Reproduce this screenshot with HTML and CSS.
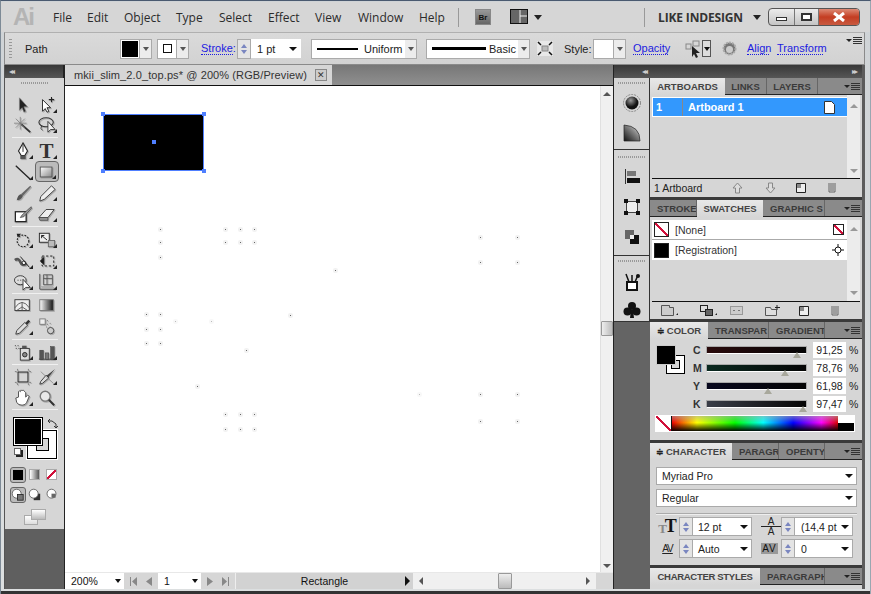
FILE: index.html
```html
<!DOCTYPE html>
<html lang="en">
<head>
<meta charset="utf-8">
<title>Illustrator</title>
<link rel="stylesheet" href="styles.css">
</head>
<body>
<div class="app">
  <header class="titlebar">
    <span class="logo">Ai</span>
    <nav class="menu"><span>File</span><span>Edit</span><span>Object</span><span>Type</span><span>Select</span><span>Effect</span><span>View</span><span>Window</span><span>Help</span></nav>
    <i class="vsep"></i>
    <span class="br">Br</span>
    <svg class="layout-ic" width="18" height="16" viewBox="0 0 18 16"><rect x=".5" y=".5" width="17" height="14" fill="#666" stroke="#111"/><path d="M10 1v13M10 7h7" stroke="#eee"/></svg>
    <i class="tri tri-l"></i>
    <i class="vsep vsep2"></i>
    <span class="workspace">LIKE INDESIGN</span>
    <i class="tri tri-w"></i>
    <div class="winbtns">
      <span class="wb"><i class="min"></i></span>
      <span class="wb wb2"><i class="max"></i></span>
      <span class="wb close"><svg width="14" height="10" viewBox="0 0 14 10"><path d="M2 1l10 8M12 1L2 9" stroke="#fff" stroke-width="3"/></svg></span>
    </div>
  </header>

  <section class="control">
    <i class="grip"></i>
    <span class="c-path">Path</span>
    <span class="sw sw-fill"></span><span class="dd"><i class="tri-s"></i></span>
    <span class="sw sw-stroke"><i></i></span><span class="dd"><i class="tri-s"></i></span>
    <a class="link c-stroke">Stroke:</a>
    <span class="spin"><i class="up"></i><i class="down"></i></span>
    <span class="field c-pt">1 pt<i class="tri-k"></i></span>
    <span class="linebox lb1"><i class="ln ln1"></i><b>Uniform</b></span><span class="dd dd2"><i class="tri-s"></i></span>
    <span class="linebox lb2"><i class="ln ln2"></i><b>Basic</b></span><span class="dd dd2"><i class="tri-s"></i></span>
    <svg class="c-expand" width="16" height="15" viewBox="0 0 16 15"><rect width="16" height="15" fill="#e8e8e8"/><rect x="5" y="5" width="6" height="5" fill="#bbb" stroke="#888"/><path d="M1 1l3 3M15 1l-3 3M1 14l3-3M15 14l-3-3" stroke="#111" stroke-width="1.500"/></svg>
    <span class="c-style">Style:</span>
    <span class="sw sw-style"></span><span class="dd"><i class="tri-s"></i></span>
    <a class="link c-op">Opacity</a>
    <svg class="c-sel" width="17" height="18" viewBox="0 0 17 18"><rect x="1" y="4" width="5" height="5" fill="none" stroke="#888"/><rect x="8" y="1" width="6" height="5" fill="none" stroke="#888"/><path d="M7 6l8 7-4 0 2 4-2 1-2-4-2 3z" fill="#222"/></svg>
    <span class="c-sd"><i class="tri-k"></i></span>
    <svg class="c-gear" width="15" height="15" viewBox="0 0 15 15"><circle cx="7.500" cy="7.500" r="6" fill="#777" stroke="#aaa" stroke-width="2" stroke-dasharray="2 1"/><circle cx="7.500" cy="8.500" r="3.500" fill="#ccc"/></svg>
    <a class="link c-al">Align</a>
    <a class="link c-tr">Transform</a>
    <span class="c-menu"><i class="tri-m"></i><i class="lines"></i></span>
  </section>

  <main class="work">
    <aside class="tools">
      <div class="strip strip-l"><span class="dbl">◂◂</span></div>
      <i class="hgrip"></i>
      <div class="tgrid">
        <span class="t"><svg viewBox="0 0 20 20"><path d="M6 2v14l3-3 2 5 2-1-2-5h4z" fill="#222" stroke="#888" stroke-width=".6"/></svg></span>
        <span class="t c"><svg viewBox="0 0 20 20"><path d="M5 4v13l3-3 2 4 2-1-2-4h4z" fill="#fff" stroke="#222"/><path d="M15 1v6M12 4h6" stroke="#222" stroke-width="1.200"/></svg></span>
        <span class="t"><svg viewBox="0 0 20 20"><path d="M8 9l10 9" stroke="#333" stroke-width="2"/><path d="M7 1v14M0 8h14M2 3l10 10M12 3L2 13" stroke="#777" stroke-width=".8"/></svg></span>
        <span class="t c"><svg viewBox="0 0 20 20"><ellipse cx="9" cy="7" rx="8" ry="5" fill="none" stroke="#333" stroke-width="1.200"/><path d="M4 11q-2 3 1 5" fill="none" stroke="#333"/><path d="M11 6v12l3-3h5z" fill="#eee" stroke="#333"/></svg></span>
        <i class="tsep"></i>
        <span class="t c"><svg viewBox="0 0 20 20"><path d="M10 1l-5 9 3 5h4l3-5z" fill="#fff" stroke="#222" stroke-width="1.200"/><path d="M10 3v8" stroke="#222"/><rect x="7" y="15" width="6" height="4" fill="#555"/></svg></span>
        <span class="t c"><b class="tt">T</b></span>
        <span class="t c"><svg viewBox="0 0 20 20"><path d="M2 3l16 15" stroke="#222" stroke-width="1.300"/></svg></span>
        <span class="t c active"><svg viewBox="0 0 20 20"><defs><linearGradient id="g1" x1="0" y1="0" x2="1" y2="1"><stop offset="0" stop-color="#fff"/><stop offset="1" stop-color="#888"/></linearGradient></defs><rect x="2.500" y="4.500" width="13" height="11" fill="url(#g1)" stroke="#555"/></svg></span>
        <span class="t"><svg viewBox="0 0 20 20"><path d="M18 2L8 11l2 2 9-10z" fill="#666"/><path d="M8 11q-4 1-5 7 5 0 7-5z" fill="#555"/></svg></span>
        <span class="t c"><svg viewBox="0 0 20 20"><path d="M15 2l4 4L7 17l-5 2 1-5z" fill="#eee" stroke="#333"/></svg></span>
        <span class="t"><svg viewBox="0 0 20 20"><rect x="1.500" y="7.500" width="12" height="11" fill="#fff" stroke="#222" stroke-width="1.400"/><path d="M19 2L9 11l-2 3 4-1 9-10z" fill="#999" stroke="#333" stroke-width=".7"/></svg></span>
        <span class="t c"><svg viewBox="0 0 20 20"><path d="M1 14l8-9h9l-7 9z" fill="#eee" stroke="#333"/><path d="M1 14h10v3H2z" fill="#999" stroke="#333" stroke-width=".7"/></svg></span>
        <i class="tsep"></i>
        <span class="t c"><svg viewBox="0 0 20 20"><circle cx="10" cy="11" r="6.500" fill="none" stroke="#222" stroke-width="1.300" stroke-dasharray="2 1.500"/><path d="M3 3l5 0-4 4z" fill="#222"/></svg></span>
        <span class="t c"><svg viewBox="0 0 20 20"><rect x="1.500" y="2.500" width="11" height="10" fill="#eee" stroke="#222"/><rect x="11.500" y="10.500" width="7" height="7" fill="#bbb" stroke="#666"/><path d="M10 10L4 5M4 5v3M4 5h3" fill="none" stroke="#111"/></svg></span>
        <span class="t c"><svg viewBox="0 0 20 20"><path d="M1 9q4-3 6 2t7 2" fill="none" stroke="#555" stroke-width="3"/><circle cx="11" cy="12" r="2" fill="#fff" stroke="#222"/><path d="M7 5l10 12" stroke="#222"/></svg></span>
        <span class="t c"><svg viewBox="0 0 20 20"><path d="M2 10l5-5v10z" fill="#222"/><rect x="4.500" y="4.500" width="13" height="11" fill="none" stroke="#111" stroke-dasharray="2.500 2"/></svg></span>
        <span class="t c"><svg viewBox="0 0 20 20"><ellipse cx="7" cy="8" rx="6.500" ry="5" fill="#ddd" stroke="#333"/><path d="M10 7v12l3-3h5z" fill="#fff" stroke="#333"/><path d="M4 8h1M7 8h1" stroke="#222"/></svg></span>
        <span class="t c"><svg viewBox="0 0 20 20"><path d="M2 1v17h17" fill="none" stroke="#444"/><path d="M6 2h10v11H6zM6 6h10M10 2v11" fill="none" stroke="#555"/><path d="M3 15h14M3 17h14" stroke="#aaa"/></svg></span>
        <i class="tsep"></i>
        <span class="t"><svg viewBox="0 0 20 20"><rect x="1" y="3" width="16" height="12" fill="#eee" stroke="#333"/><path d="M1 12q8-12 16 0M9 6v9M3 15l6-4 6 4" fill="none" stroke="#555"/></svg></span>
        <span class="t"><svg viewBox="0 0 20 20"><defs><linearGradient id="g2"><stop offset="0" stop-color="#fff"/><stop offset="1" stop-color="#111"/></linearGradient></defs><rect x="2" y="3" width="15" height="12" fill="url(#g2)" stroke="#777"/></svg></span>
        <span class="t c"><svg viewBox="0 0 20 20"><path d="M16 2l2 2-4 4-2-2z" fill="#333"/><path d="M12 5l3 3L6 17l-4 1 1-4z" fill="#ddd" stroke="#333"/></svg></span>
        <span class="t"><svg viewBox="0 0 20 20"><rect x="2" y="1" width="6" height="6" fill="#eee" stroke="#777"/><circle cx="14" cy="14" r="3.500" fill="#ccc" stroke="#444"/><path d="M10 3h1M13 6h1M10 7h1M13 10h1M9 10h1" stroke="#666"/></svg></span>
        <i class="tsep"></i>
        <span class="t c"><svg viewBox="0 0 20 20"><rect x="7" y="6" width="10" height="13" fill="#ddd" stroke="#333"/><circle cx="12" cy="13" r="2.500" fill="#888" stroke="#222"/><rect x="9" y="3" width="5" height="3" fill="#555"/><path d="M1 3h1M4 3h1M2 6h1M5 6h1" stroke="#222"/></svg></span>
        <span class="t c"><svg viewBox="0 0 20 20"><path d="M1 18h18" stroke="#333"/><rect x="2" y="8" width="4" height="10" fill="#555" stroke="#333" stroke-width=".5"/><rect x="8" y="11" width="4" height="7" fill="#777" stroke="#333" stroke-width=".5"/><rect x="14" y="4" width="4" height="14" fill="#555" stroke="#333" stroke-width=".5"/></svg></span>
        <i class="tsep"></i>
        <span class="t"><svg viewBox="0 0 20 20"><rect x="4.500" y="4.500" width="11" height="11" fill="none" stroke="#333" stroke-width="1.200"/><path d="M1 4h2M17 4h2M1 16h2M17 16h2M4 1v2M16 1v2M4 17v2M16 17v2" stroke="#777"/></svg></span>
        <span class="t c"><svg viewBox="0 0 20 20"><path d="M19 1L9 9l2 2z" fill="#444"/><path d="M9 8l3 3-7 6-3 1 1-3z" fill="#ddd" stroke="#333"/><path d="M3 4l14 13" stroke="#888" stroke-width=".7"/></svg></span>
        <span class="t c"><svg viewBox="0 0 20 20"><path d="M2 10l3-1V3l1-1 1 1 1-2 1 1 1-1 1 1 1 1 1 1v5l2-2 2 1-3 7q-1 3-5 3-4 0-6-3z" fill="#fff" stroke="#444"/></svg></span>
        <span class="t"><svg viewBox="0 0 20 20"><circle cx="8" cy="8" r="5.500" fill="#e8e8e8" stroke="#777" stroke-width="1.500"/><path d="M12 12l6 6" stroke="#333" stroke-width="2.200"/></svg></span>
        <i class="tsep"></i>
      </div>
      <div class="fs">
        <span class="stroke-big"><i></i></span>
        <span class="fill-big"></span>
        <svg class="swap" width="11" height="11" viewBox="0 0 11 11"><path d="M1 3h4l4 3v4M1 3l2-2M1 3l2 2M9 10l-2-2M9 10l2-2" fill="none" stroke="#333"/></svg>
        <span class="mini"></span>
      </div>
      <i class="tsep tsep-f"></i>
      <div class="modes">
        <span class="m active"><i class="m-fill"></i></span>
        <span class="m"><i class="m-grad"></i></span>
        <span class="m"><i class="m-none"></i></span>
      </div>
      <i class="tsep tsep-f"></i>
      <div class="modes">
        <span class="m active"><svg viewBox="0 0 16 16"><circle cx="7" cy="7" r="5.500" fill="#fff" stroke="#555"/><rect x="8" y="8" width="7" height="7" fill="#777" stroke="#222"/></svg></span>
        <span class="m"><svg viewBox="0 0 16 16"><rect x="7" y="7" width="8" height="8" fill="#333"/><circle cx="7" cy="7" r="5.500" fill="#fff" stroke="#555"/></svg></span>
        <span class="m"><svg viewBox="0 0 16 16"><circle cx="8" cy="7" r="5.500" fill="#fff" stroke="#555"/><rect x="8" y="7" width="5" height="5" fill="#666"/></svg></span>
      </div>
      <i class="tsep tsep-f"></i>
      <div class="screen"><span class="s1"></span><span class="s2"></span></div>
      <div class="tools-foot"></div>
    </aside>

    <section class="doc">
      <div class="tabbar"><div class="tab"><span>mkii_slim_2.0_top.ps* @ 200% (RGB/Preview)</span><i class="tabx">✕</i></div></div>
      <div class="docbody">
        <div class="canvas">
          <svg class="art" viewBox="65 86 535 486" width="535" height="486">
            <rect x="103.500" y="114.500" width="100" height="56" fill="#000" stroke="#4f7fff" stroke-width="1"/>
            <path d="M101 112h4v4h-4zM202 112h4v4h-4zM101 169h4v4h-4zM202 169h4v4h-4zM152 140h4v4h-4z" fill="#4f7fff"/>
            <g class="pts">
              <path d="M160 229h1v1h-1zM160 242h1v1h-1zM160 257h1v1h-1zM225 229h1v1h-1zM240 229h1v1h-1zM254 229h1v1h-1zM225 242h1v1h-1zM240 242h1v1h-1zM254 242h1v1h-1zM480 237h1v1h-1zM517 237h1v1h-1zM480 262h1v1h-1zM517 262h1v1h-1zM335 270h1v1h-1zM146 314h1v1h-1zM160 314h1v1h-1zM146 329h1v1h-1zM160 329h1v1h-1zM146 343h1v1h-1zM160 343h1v1h-1zM290 315h1v1h-1zM246 350h1v1h-1zM197 386h1v1h-1zM480 394h1v1h-1zM517 394h1v1h-1zM225 414h1v1h-1zM240 414h1v1h-1zM254 414h1v1h-1zM225 429h1v1h-1zM240 429h1v1h-1zM254 429h1v1h-1zM480 421h1v1h-1zM517 421h1v1h-1z"/>
            </g>
            <g class="pts pts2"><path d="M175 321h1v1h-1zM211 321h1v1h-1zM419 394h1v1h-1z"/></g>
          </svg>
        </div>
        <div class="vscroll"><i class="sc-up"></i><span class="thumb"></span><i class="sc-dn"></i></div>
      </div>
      <div class="status">
        <span class="zoom">200%<i class="tri-k"></i></span>
        <span class="nav"><svg width="7" height="9" viewBox="0 0 7 9"><path d="M0 0h1v9H0zM7 0v9L2 4.500z" fill="#888"/></svg><svg width="6" height="9" viewBox="0 0 6 9"><path d="M6 0v9L0 4.500z" fill="#888"/></svg></span>
        <span class="page">1<i class="tri-k"></i></span>
        <span class="nav"><svg width="6" height="9" viewBox="0 0 6 9"><path d="M0 0v9l6-4.500z" fill="#888"/></svg><svg width="7" height="9" viewBox="0 0 7 9"><path d="M6 0h1v9H6zM0 0v9l5-4.500z" fill="#888"/></svg></span>
        <span class="stat-name"><span>Rectangle</span><i class="tri-r"></i></span>
        <span class="hscroll"><i class="h-l"></i><span class="hthumb"></span><i class="h-r"></i></span>
      </div>
    </section>

    <aside class="dock">
      <div class="strip strip-d"><span class="dbl">◂◂</span></div>
      <div class="dgroup g1">
        <i class="hgrip"></i>
        <svg width="20" height="20" viewBox="0 0 20 20"><circle cx="10" cy="10" r="8.500" fill="none" stroke="#888" stroke-dasharray="2 1"/><defs><radialGradient id="g3" cx=".4" cy=".3"><stop offset="0" stop-color="#999"/><stop offset="1" stop-color="#111"/></radialGradient></defs><circle cx="10" cy="10" r="6.500" fill="url(#g3)"/></svg>
        <svg width="18" height="18" viewBox="0 0 18 18"><defs><linearGradient id="g4" x1="0" y1="1" x2="1" y2="0"><stop offset="0" stop-color="#111"/><stop offset=".6" stop-color="#888"/><stop offset="1" stop-color="#eee"/></linearGradient></defs><path d="M1 1q16 1 16 16H1z" fill="url(#g4)" stroke="#222" stroke-width=".7"/></svg>
      </div>
      <div class="dgroup g2">
        <i class="hgrip"></i>
        <svg width="16" height="16" viewBox="0 0 16 16"><path d="M1.500 0v15" stroke="#333"/><rect x="3" y="2" width="9" height="5" fill="#777"/><rect x="3" y="9" width="13" height="5" fill="#111"/></svg>
        <svg width="16" height="16" viewBox="0 0 16 16"><rect x="2.500" y="2.500" width="11" height="11" fill="#eee" stroke="#444"/><path d="M0 0h4v4H0zM12 0h4v4h-4zM0 12h4v4H0zM12 12h4v4h-4z" fill="#111"/></svg>
        <svg width="16" height="16" viewBox="0 0 16 16"><rect x="1" y="1" width="9" height="9" fill="#666"/><rect x="6" y="6" width="9" height="9" fill="#111"/><rect x="6" y="6" width="4" height="4" fill="#eee"/></svg>
      </div>
      <div class="dgroup g3">
        <i class="hgrip"></i>
        <svg width="16" height="18" viewBox="0 0 16 18"><path d="M3 9h10v8H3z" fill="#fff" stroke="#111" stroke-width="2"/><path d="M5 9L2 1M8 9V2M11 9l3-7" stroke="#111" stroke-width="1.500"/><circle cx="14" cy="3" r="2" fill="#111"/></svg>
        <svg width="18" height="18" viewBox="0 0 18 18"><circle cx="9" cy="5" r="4" fill="#111"/><circle cx="4.500" cy="10.500" r="4" fill="#111"/><circle cx="13.500" cy="10.500" r="4" fill="#111"/><path d="M8 9h2l1 8H7z" fill="#111"/></svg>
      </div>
      <div class="dock-foot"></div>
    </aside>

    <aside class="panels">
      <div class="strip strip-r"><span class="dbl">▸▸</span></div>
      <section class="panel p-art">
        <div class="tabs"><b class="on w-a">ARTBOARDS</b><b class="w-l">LINKS</b><b class="w-y">LAYERS</b><i class="c-menu"><i class="tri-m"></i><i class="lines"></i></i></div>
        <div class="listwrap">
          <div class="list">
            <div class="art-row"><span class="ar-n">1</span><span class="ar-t">Artboard 1</span><svg width="11" height="13" viewBox="0 0 11 13"><path d="M.5.5h7l3 3v9H.5z" fill="#fff" stroke="#333"/></svg></div>
          </div>
          <div class="lscroll"><i class="sc-up"></i><i class="sc-dn"></i></div>
        </div>
        <div class="pfoot"><span class="foot-txt">1 Artboard</span>
          <svg class="fa" width="11" height="12" viewBox="0 0 11 12"><path d="M5.500 1L1 6h2.500v5h4V6H10z" fill="#ddd" stroke="#888"/></svg>
          <svg class="fb" width="11" height="12" viewBox="0 0 11 12"><path d="M5.500 11L1 6h2.500V1h4v5H10z" fill="#ddd" stroke="#888"/></svg>
          <svg class="fc" width="10" height="10" viewBox="0 0 10 10"><path d="M.5.5h9v9h-9z" fill="#eee" stroke="#222"/><path d="M1 1h4v4H1z" fill="#888"/></svg>
          <svg class="fd" width="10" height="11" viewBox="0 0 10 11"><path d="M1 2h8M2 3v7h6V3M4 3v6M6 3v6" fill="none" stroke="#666"/></svg>
        </div>
      </section>
      <section class="panel p-sw">
        <div class="tabs"><b class="w-s sp">STROKE</b><b class="on w-w">SWATCHES</b><b class="w-g sp">GRAPHIC S</b><i class="c-menu"><i class="tri-m"></i><i class="lines"></i></i></div>
        <div class="listwrap lw2">
          <div class="list">
            <div class="sw-row"><span class="chip chip-none"></span><span class="sw-t">[None]</span><span class="chip-s"></span></div>
            <div class="sw-row"><span class="chip chip-black"></span><span class="sw-t">[Registration]</span><svg width="12" height="12" viewBox="0 0 12 12"><path d="M6 0v12M0 6h12" stroke="#111"/><circle cx="6" cy="6" r="3" fill="#fff" stroke="#111"/></svg></div>
          </div>
          <div class="lscroll"><i class="sc-up"></i><i class="sc-dn"></i></div>
        </div>
        <div class="pfoot pf2">
          <svg class="s1i" width="13" height="11" viewBox="0 0 13 11"><path d="M.5.500h8v2h4v8h-12z" fill="#ccc" stroke="#555"/></svg><i class="cn"></i>
          <svg class="s2i" width="13" height="11" viewBox="0 0 13 11"><rect x=".5" y=".5" width="7" height="6" fill="#ddd" stroke="#222"/><rect x="5.500" y="4.500" width="7" height="6" fill="#666" stroke="#222"/></svg><i class="cn"></i>
          <svg class="s3i" width="13" height="9" viewBox="0 0 13 9"><rect x=".5" y=".5" width="12" height="8" fill="#ccc" stroke="#999"/><path d="M3 4.500h2M8 4.500h2" stroke="#777"/></svg>
          <svg class="s4i" width="15" height="11" viewBox="0 0 15 11"><path d="M.5 2.500h5l1 2h5v6H.5z" fill="#ddd" stroke="#555"/><path d="M12 0v5M10 2.500h5" stroke="#222"/></svg>
          <svg class="s5i" width="10" height="10" viewBox="0 0 10 10"><path d="M.5.5h9v9h-9z" fill="#eee" stroke="#222"/><path d="M1 1h4v4H1z" fill="#888"/></svg>
          <svg class="s6i" width="10" height="11" viewBox="0 0 10 11"><path d="M1 2h8M2 3v7h6V3M4 3v6M6 3v6" fill="none" stroke="#666"/></svg>
        </div>
      </section>
      <section class="panel p-col">
        <div class="tabs"><b class="on w-c"><i class="ud">≑</i>COLOR</b><b class="w-t sp">TRANSPAR</b><b class="w-r sp">GRADIENT</b><i class="c-menu"><i class="tri-m"></i><i class="lines"></i></i></div>
        <div class="colbody">
          <div class="col-sw"><span class="cs-s"><i></i></span><span class="cs-f"></span></div>
          <div class="sliders">
            <div class="sl"><b>C</b><span class="track tc"><i class="pt p91"></i></span><span class="val">91,25</span><em>%</em></div>
            <div class="sl"><b>M</b><span class="track tm"><i class="pt p78"></i></span><span class="val">78,76</span><em>%</em></div>
            <div class="sl"><b>Y</b><span class="track ty"><i class="pt p61"></i></span><span class="val">61,98</span><em>%</em></div>
            <div class="sl"><b>K</b><span class="track tk"><i class="pt p97"></i></span><span class="val">97,47</span><em>%</em></div>
          </div>
        </div>
        <div class="spectrum"><span class="sp-none"></span><span class="sp-bar"></span><span class="sp-bw"></span></div>
      </section>
      <section class="panel p-char">
        <div class="tabs"><b class="on w-h"><i class="ud">≑</i>CHARACTER</b><b class="w-p sp">PARAGR</b><b class="w-o sp">OPENTY</b><i class="c-menu"><i class="tri-m"></i><i class="lines"></i></i></div>
        <div class="charbody">
          <div class="sel">Myriad Pro<i class="tri-k"></i></div>
          <div class="sel sel2">Regular<i class="tri-k"></i></div>
          <i class="ch-sep"></i>
          <div class="chgrid">
            <span class="ci ci-t"></span><span class="spin"><i class="up"></i><i class="down"></i></span><span class="ch-f">12 pt<i class="tri-k"></i></span>
            <span class="ci ci-a"></span><span class="spin"><i class="up"></i><i class="down"></i></span><span class="ch-f f2">(14,4 pt<i class="tri-k"></i></span>
            <span class="ci ci-k"></span><span class="spin"><i class="up"></i><i class="down"></i></span><span class="ch-f">Auto<i class="tri-k"></i></span>
            <span class="ci ci-v"></span><span class="spin"><i class="up"></i><i class="down"></i></span><span class="ch-f f2">0<i class="tri-k"></i></span>
          </div>
        </div>
      </section>
      <section class="panel p-cs">
        <div class="tabs"><b class="on w-cs">CHARACTER STYLES</b><b class="w-pa sp">PARAGRAPH</b><i class="c-menu"><i class="tri-m"></i><i class="lines"></i></i></div>
      </section>
    </aside>
  </main>
</div>
</body>
</html>
```

FILE: styles.css
```css
* { box-sizing: border-box; }
html, body { margin: 0; height: 100%; overflow: hidden; }
body { width: 871px; height: 594px; background: #5c5c5c; font-family: "Liberation Sans", Arial, sans-serif; font-size: 11px; color: #222; }
i, em { font-style: normal; }
.app { width: 871px; height: 594px; display: flex; flex-direction: column; padding: 1px 5px 0 4px; background: linear-gradient(#cfd3d6 0, #dcdfe0 590px, #333 590px); border-top: 1px solid #4a5a70; border-left: 1px solid #7d8a96; border-right: 1px solid #9aa6b0; overflow: hidden; }

/* title */
.titlebar { height: 30px; margin: 0 -5px 0 -4px; display: flex; align-items: center; flex: none; background: #d6d6d6; }
.titlebar > * { flex: none; }
.logo { margin-left: 12px; width: 36px; font: bold 24px "Liberation Sans", sans-serif; color: #b4b4b4; letter-spacing: -2px; }
.menu { display: flex; font: 12px "Open Sans", sans-serif; color: #2b2b2b; margin-left: 4px; }
.menu span:nth-child(1) { width: 34px; } .menu span:nth-child(2) { width: 37px; } .menu span:nth-child(3) { width: 52px; }
.menu span:nth-child(4) { width: 43px; } .menu span:nth-child(5) { width: 49px; } .menu span:nth-child(6) { width: 47px; }
.menu span:nth-child(7) { width: 43px; } .menu span:nth-child(8) { width: 61px; } .menu span:nth-child(9) { width: 34px; }
.vsep { width: 1px; height: 19px; background: #999; margin-left: 5px; }
.br { margin-left: 16px; width: 16px; height: 16px; background: linear-gradient(#999, #666); border: 1px solid #888; color: #111; font: bold 8px "Liberation Sans"; display: flex; align-items: center; justify-content: center; }
.layout-ic { margin-left: 19px; }
.tri { width: 0; height: 0; border: 4px solid transparent; border-top: 5px solid #222; border-bottom: 0; }
.tri-l { margin-left: 6px; }
.vsep2 { margin-left: 102px; }
.workspace { margin-left: 13px; font: bold 12px "Open Sans", sans-serif; color: #333; width: 85px; white-space: nowrap; letter-spacing: -.15px; }
.tri-w { margin-left: 10px; }
.winbtns { margin-left: 7px; width: 92px; height: 18px; margin-top: -1px; display: flex; border: 1px solid #555; border-radius: 4px; overflow: hidden; background: linear-gradient(#ececec, #c4c4c4); }
.wb { width: 26px; border-right: 1px solid #777; display: flex; align-items: center; justify-content: center; flex: none; }
.wb2 { width: 24px; }
.min { width: 11px; height: 4px; border: 1px solid #333; background: #fff; margin-top: 5px; }
.max { width: 11px; height: 8px; border: 2px solid #333; background: #fff; }
.close { width: 40px; border: 0; background: linear-gradient(#dd8a75, #c43d22 50%, #c85a40); }

/* control */
.control { flex: none; height: 33px; margin: 0 0 0 -1px; border: 1px solid #8a8a8a; border-top: 1px solid #b0b0b0; background: linear-gradient(#dadada, #d2d2d2); display: flex; align-items: center; position: relative; }
.control > * { flex: none; }
.grip { width: 3px; height: 19px; margin-left: 4px; background: repeating-linear-gradient(#999 0 1px, transparent 1px 3px); }
.c-path { margin-left: 13px; width: 95px; }
.sw { width: 20px; height: 20px; border: 1px solid #aaa; background: #fff; display: flex; align-items: center; justify-content: center; }
.sw-fill { background: #000; outline: 1px solid #fff; outline-offset: -2px; }
.sw-stroke { margin-left: 5px; }
.sw-stroke i { width: 9px; height: 9px; border: 1px solid #111; }
.sw-style { margin-left: 2px; width: 21px; }
.dd { width: 12px; height: 20px; background: #ececec; border: 1px solid #aaa; border-left: 0; display: flex; align-items: center; justify-content: center; }
.tri-s { width: 0; height: 0; border: 3.500px solid transparent; border-top: 4px solid #555; border-bottom: 0; }
.tri-k { display: block; width: 0; height: 0; border: 4px solid transparent; border-top: 4px solid #111; border-bottom: 0; }
.link { color: #1c1ce0; border-bottom: 1px dotted #1c1ce0; line-height: 12px; }
.c-stroke { margin-left: 12px; width: 32px; white-space: nowrap; }
.spin { width: 14px; height: 18px; border: 1px solid #aaa; background: #e4e4e4; display: flex; flex-direction: column; align-items: center; justify-content: center; gap: 2px; }
.up, .down { width: 0; height: 0; border: 3.500px solid transparent; }
.up { border-bottom: 4px solid #7a86c0; border-top: 0; }
.down { border-top: 4px solid #7a86c0; border-bottom: 0; }
.control .spin { margin-left: 4px; height: 20px; }
.field { width: 50px; height: 19px; background: #fff; display: flex; align-items: center; justify-content: space-between; padding: 0 4px 0 6px; }
.linebox { height: 20px; background: #fff; border: 1px solid #aaa; border-right: 0; display: flex; align-items: center; overflow: hidden; }
.linebox b { font-weight: 400; }
.lb1 { width: 94px; margin-left: 10px; padding-left: 5px; }
.lb2 { width: 92px; margin-left: 9px; padding-left: 5px; }
.ln { display: block; height: 2px; background: #000; flex: none; }
.ln1 { width: 41px; margin-right: 6px; }
.ln2 { width: 54px; height: 3px; margin-right: 3px; }
.c-expand { margin-left: 7px; }
.c-style { margin-left: 11px; width: 27px; }
.c-op { margin-left: 7px; width: 35px; white-space: nowrap; }
.c-sel { margin-left: 17px; }
.c-sd { width: 9px; height: 17px; border: 1px solid #555; background: #ddd; display: flex; align-items: center; justify-content: center; }
.c-sd .tri-k { border-width: 3px; border-top-width: 4px; border-bottom: 0; }
.c-gear { margin-left: 11px; }
.c-al { margin-left: 10px; width: 22px; }
.c-tr { margin-left: 8px; width: 46px; white-space: nowrap; }
.control > .c-menu { position: absolute; right: 2px; top: 4px; }
.c-menu { display: flex; align-items: center; gap: 1px; }
.tri-m { display: block; width: 0; height: 0; border: 3px solid transparent; border-top: 3px solid #222; border-bottom: 0; }
.lines { display: block; width: 9px; height: 7px; background: repeating-linear-gradient(#333 0 1px, transparent 1px 2px); }

/* work area */
.work { flex: 1; min-height: 0; display: grid; grid-template-columns: 60px 549px 36px 212px; background: #5c5c5c; margin-bottom: 5px; box-shadow: -1px 0 0 #555; }
.strip { height: 13px; background: linear-gradient(#383838, #565656); color: #ccc; font-size: 8px; line-height: 13px; padding: 0 4px; flex: none; }
.dbl { letter-spacing: -2px; }
.strip-l { border-right: 1px solid #222; }
.strip-d { text-align: right; padding-right: 4px; }
.strip-r { text-align: right; padding-right: 6px; }
.hgrip { display: block; flex: none; width: 27px; height: 2px; margin: 4px auto 0; background: repeating-linear-gradient(90deg, #999 0 1px, transparent 1px 2px); }

/* tools */
.tools { background: #d6d6d6; display: flex; flex-direction: column; border-right: 1px solid #222; overflow: hidden; }
.tgrid { display: grid; grid-template-columns: 24px 24px; justify-content: center; margin-top: 11px; grid-template-rows: 20px 20px 5px 21px 21px 21px 21px 5px 21px 21px 21px 3px 21px 21px 4px 21px 4px 21px 21px 3px; flex: none; }
.t { position: relative; display: flex; align-items: center; justify-content: center; }
.t svg { width: 18px; height: 18px; filter: drop-shadow(1px 1px 0 rgba(0,0,0,.2)); }
.t.c::after { content: ""; position: absolute; right: 2px; bottom: 2px; border: 2px solid #222; border-top-color: transparent; border-left-color: transparent; }
.t.active { background: #bbb; border: 1px solid #666; border-radius: 4px; }
.tt { font: bold 21px "Liberation Serif", serif; color: #333; line-height: 18px; }
.tsep { grid-column: 1 / 3; height: 1px; background: #f0f0f0; align-self: center; margin: 0 1px; }
.tsep-f { display: block; flex: none; height: 1px; margin: 0 4px; }
.fs { position: relative; height: 48px; flex: none; margin-top: 5px; }
.fill-big { position: absolute; left: 8px; top: 1px; width: 30px; height: 29px; background: #000; border: 1px solid #000; outline: 1px solid #fff; outline-offset: -2px; }
.stroke-big { position: absolute; left: 22px; top: 14px; width: 30px; height: 29px; background: #fff; border: 1px solid #000; outline: 1px solid #fff; display: flex; align-items: center; justify-content: center; }
.stroke-big i { width: 13px; height: 13px; border: 1px solid #000; background: #d6d6d6; }
.swap { position: absolute; left: 42px; top: 2px; }
.mini { position: absolute; left: 9px; top: 32px; width: 7px; height: 7px; background: #fff; border: 1px solid #666; box-shadow: 2px 2px 0 0 #222; }
.modes { height: 19px; flex: none; display: flex; justify-content: center; gap: 1px; align-items: center; }
.m { width: 16px; height: 16px; display: flex; align-items: center; justify-content: center; }
.m svg { width: 13px; height: 13px; }
.m.active { background: #bbb; border: 1px solid #666; border-radius: 3px; }
.m-fill { width: 10px; height: 10px; background: #000; }
.m-grad { width: 11px; height: 11px; background: linear-gradient(90deg, #fff, #555); border: 1px solid #aaa; }
.m-none { width: 11px; height: 11px; background: linear-gradient(135deg, #fff 42%, #d0103a 42% 58%, #fff 58%); border: 1px solid #aaa; }
.screen { position: relative; height: 24px; flex: none; }
.s1, .s2 { position: absolute; display: block; background: linear-gradient(#fff, #ddd); border: 1px solid #aaa; }
.s1 { left: 19px; top: 10px; width: 14px; height: 10px; }
.s2 { left: 26px; top: 4px; width: 15px; height: 11px; background: linear-gradient(#fff, #bbb); }
.tools-foot { flex: 1; background: #5f5f5f; }

/* doc */
.doc { display: flex; flex-direction: column; min-width: 0; border-right: 1px solid #222; }
.tabbar { height: 21px; flex: none; background: linear-gradient(#777, #8f8f8f); border-bottom: 1px solid #111; }
.tab { width: 267px; height: 20px; background: #d6d6d6; display: flex; align-items: center; padding: 0 5px 0 9px; font-size: 11px; color: #333; justify-content: space-between; white-space: nowrap; letter-spacing: .1px; }
.tabx { width: 12px; height: 12px; border: 1px solid #888; background: #ccc; font-size: 9px; line-height: 10px; text-align: center; flex: none; }
.docbody { flex: 1; display: flex; min-height: 0; }
.canvas { width: 535px; background: #fff; overflow: hidden; }
.art { display: block; }
.pts path { fill: #666; stroke: #f2f2f2; stroke-width: 4px; stroke-linejoin: round; paint-order: stroke; }
.pts2 path { fill: #bbb; stroke: #f8f8f8; }
.vscroll { flex: 1; background: #f0f0f0; border-left: 1px solid #e0e0e0; position: relative; display: flex; flex-direction: column; justify-content: space-between; align-items: center; padding: 6px 0 4px; }
.sc-up { width: 0; height: 0; border: 4px solid transparent; border-bottom: 4px solid #555; border-top: 0; }
.sc-dn { width: 0; height: 0; border: 4px solid transparent; border-top: 4px solid #555; border-bottom: 0; }
.thumb { position: absolute; top: 235px; left: 0; width: 12px; height: 15px; background: linear-gradient(90deg, #eee, #bbb); border: 1px solid #999; border-radius: 1px; }
.status { height: 17px; flex: none; display: flex; align-items: center; background: #d6d6d6; font-size: 10.500px; color: #111; border-top: 1px solid #e8e8e8; }
.status > * { flex: none; }
.zoom, .page { background: #fff; height: 16px; display: flex; align-items: center; justify-content: space-between; padding: 0 3px 0 6px; }
.zoom { width: 59px; }
.page { width: 43px; }
.zoom .tri-k, .page .tri-k { border-width: 3.500px; border-top-width: 4px; border-bottom: 0; }
.nav { width: 34px; display: flex; gap: 9px; justify-content: center; align-items: center; }
.stat-name { width: 178px; height: 16px; display: flex; align-items: center; justify-content: center; position: relative; background: #d2d2d2; border-left: 1px solid #eee; }
.tri-r { position: absolute; right: 3px; top: 3px; border: 5px solid transparent; border-left: 5px solid #111; border-right: 0; }
.hscroll { width: 183px; height: 16px; background: #f0f0f0; position: relative; display: flex; justify-content: space-between; align-items: center; padding: 0 6px; }
.h-l { border: 4px solid transparent; border-right: 4px solid #555; border-left: 0; }
.h-r { border: 4px solid transparent; border-left: 4px solid #555; border-right: 0; }
.hthumb { position: absolute; left: 85px; top: 0; width: 14px; height: 16px; background: linear-gradient(#eee, #bbb); border: 1px solid #999; border-radius: 1px; }

/* dock */
.dock { display: flex; flex-direction: column; min-width: 0; background: #646464; }
.dgroup { background: #d6d6d6; display: flex; flex-direction: column; align-items: center; border-bottom: 1px solid #333; flex: none; border-right: 1px solid #333; }
.dgroup svg { flex: none; }
.g1 { height: 72px; }
.g1 .hgrip { margin-bottom: 9px; }
.g1 svg:nth-of-type(1) { margin-bottom: 11px; }
.g2 { height: 106px; }
.g2 .hgrip { margin: 6px auto 11px; }
.g2 svg { margin-bottom: 14px; }
.g2 svg:last-child { margin-bottom: 0; }
.g3 { height: 66px; }
.g3 .hgrip { margin-bottom: 11px; }
.g3 svg:nth-of-type(1) { margin-bottom: 10px; }
.dock-foot { flex: 1; }

/* panels */
.panels { display: flex; flex-direction: column; background: #3a3a3a; min-width: 0; gap: 3px; }
.panels .strip { margin-bottom: -3px; }
.panel { background: #d6d6d6; flex: none; }
.tabs { height: 17px; background: #8a8a8a; display: flex; position: relative; border-bottom: 1px solid #222; }
.tabs b { display: flex; align-items: center; justify-content: center; font-size: 9.500px; color: #3a3a3a; border-right: 1px solid #666; overflow: hidden; white-space: nowrap; font-weight: 700; flex: none; }
.tabs b.on { background: linear-gradient(#e8e8e8, #d6d6d6); height: 17px; color: #444; border-right: 0; }
.tabs .sp { justify-content: flex-start; padding-left: 7px; }
.tabs > .c-menu { position: absolute; right: 2px; top: 5px; }
.w-a { width: 75px; } .w-l { width: 42px; } .w-y { width: 51px; }
.w-s { width: 47px; } .w-w { width: 66px; } .w-g { width: 62px; }
.w-c { width: 58px; } .w-t { width: 61px; } .w-r { width: 56px; }
.w-h { width: 82px; } .w-p { width: 47px; } .w-o { width: 46px; }
.w-cs { width: 110px; letter-spacing: -.3px; } .w-pa { width: 65px; }
.ud { font-size: 9px; margin-right: 2px; color: #222; }
.p-art { height: 119px; }
.listwrap { height: 84px; display: flex; border-bottom: 1px solid #111; margin: 0 2px; }
.list { flex: 1; padding-top: 2px; }
.lw2 .list { padding-top: 0; }
.lscroll { width: 13px; background: #ececec; display: flex; flex-direction: column; justify-content: space-between; align-items: center; padding: 9px 0 5px; flex: none; }
.lw2 .lscroll { padding: 7px 0 6px; }
.lscroll .sc-up { border-bottom-color: #999; }
.lscroll .sc-dn { border-top-color: #999; }
.art-row { height: 20px; background: #3398fd; color: #fff; font-weight: 700; display: flex; align-items: center; border: 1px solid #fff; border-width: 1px 0 1px 1px; }
.ar-n { width: 30px; padding-left: 3px; border-right: 1px solid #888; height: 100%; display: flex; align-items: center; }
.ar-t { padding-left: 5px; flex: 1; font-size: 11px; }
.art-row svg { margin-right: 12px; }
.pfoot { height: 17px; display: flex; align-items: center; padding-left: 4px; }
.foot-txt { width: 77px; font-size: 10.500px; }
.fa { margin-left: 1px; } .fb { margin-left: 22px; } .fc { margin-left: 20px; } .fd { margin-left: 21px; }
.p-sw { height: 119px; }
.lw2 { height: 82px; margin-top: 3px; }
.sw-row { height: 20px; background: #fff; display: flex; align-items: center; padding-left: 2px; border-bottom: 1px solid #aaa; }
.sw-row + .sw-row { border-bottom: 0; }
.chip { width: 15px; height: 15px; border: 1px solid #222; flex: none; }
.chip-black { background: #000; }
.chip-none, .chip-s, .sp-none { background: linear-gradient(to top right, #fff 44%, #d0103a 44% 56%, #fff 56%); }
.sw-t { margin-left: 6px; flex: 1; font-size: 10.500px; color: #333; }
.chip-s { width: 11px; height: 11px; border: 1px solid #222; margin-right: 3px; }
.sw-row svg { margin-right: 3px; }
.pf2 { padding-left: 11px; }
.cn { border: 1.500px solid transparent; border-right-color: #222; border-bottom-color: #222; margin: 6px 0 0 2px; align-self: center; }
.s2i { margin-left: 22px; } .s3i { margin-left: 13px; } .s4i { margin-left: 22px; } .s5i { margin-left: 19px; } .s6i { margin-left: 21px; }
.p-col { height: 118px; }
.colbody { display: flex; padding: 6px 0 0 6px; height: 76px; }
.col-sw { position: relative; width: 33px; height: 33px; flex: none; }
.cs-f { position: absolute; left: 0; top: 0; width: 20px; height: 20px; background: #000; border: 1px solid #ccc; }
.cs-s { position: absolute; left: 10px; top: 10px; width: 19px; height: 19px; background: #fff; border: 1px solid #000; display: flex; align-items: center; justify-content: center; }
.cs-s i { width: 9px; height: 9px; border: 1px solid #000; background: #d6d6d6; }
.sliders { flex: 1; margin: -4px 0 0 4px; }
.sl { height: 18px; display: flex; align-items: center; }
.sl b { width: 13px; font-weight: 700; font-size: 10.500px; color: #333; flex: none; }
.track { width: 101px; height: 8px; border: 1px solid #aaa; border-bottom-color: #fff; position: relative; flex: none; }
.tc { background: linear-gradient(90deg, #2a0a0c, #050505); }
.tm { background: linear-gradient(90deg, #0a2a20, #050505); }
.ty { background: linear-gradient(90deg, #08081e, #050505); }
.tk { background: linear-gradient(90deg, #3a3e48, #050505); }
.pt { position: absolute; top: 5px; width: 0; height: 0; border: 4px solid transparent; border-bottom: 6px solid #a8a89c; border-top: 0; margin-left: -4px; }
.p91 { left: 91%; } .p78 { left: 79%; } .p61 { left: 62%; } .p97 { left: 97%; }
.val { width: 33px; height: 16px; background: #fff; margin-left: 6px; display: flex; align-items: center; justify-content: center; font-size: 10.500px; color: #222; flex: none; }
.sl em { margin-left: 3px; font-size: 10.500px; }
.spectrum { display: flex; height: 17px; margin: 0 7px 0 5px; border: 1px solid #fff; }
.sp-none { width: 16px; background-color: #fff; border-right: 1px solid #111; }
.sp-bar { flex: 1; background: linear-gradient(rgba(170,170,170,.6), rgba(0,0,0,0) 45%, rgba(0,0,0,.95)), linear-gradient(90deg, #e00, #ff0 15%, #0f0 38%, #0ff 55%, #00f 73%, #f0f 90%, #d00); }
.sp-bw { width: 16px; background: linear-gradient(#fff 50%, #000 50%); }
.p-char { height: 122px; }
.charbody { padding: 7px 5px 0 6px; }
.sel { height: 18px; background: #fff; border: 1px solid #aaa; display: flex; align-items: center; justify-content: space-between; padding: 0 3px 0 5px; font-size: 10.500px; color: #222; }
.sel2 { margin-top: 4px; }
.ch-sep { display: block; height: 1px; background: #aaa; border-bottom: 1px solid #eee; margin-top: 6px; box-sizing: content-box; }
.chgrid { display: grid; grid-template-columns: 23px 14px 59px 29px 14px 58px; grid-auto-rows: 19px; row-gap: 3px; margin-top: 2px; align-items: center; }
.chgrid .spin { height: 19px; }
.ch-f { height: 19px; background: #fff; border: 1px solid #aaa; border-left: 0; display: flex; align-items: center; justify-content: space-between; padding: 0 3px 0 5px; font-size: 10.500px; white-space: nowrap; }
.f2 { padding-left: 6px; }
.ci { display: flex; align-items: center; justify-content: center; }
.ci-t::before { content: "T"; font: bold 13px "Liberation Serif", serif; color: #888; margin-right: -2px; margin-top: 4px; }
.ci-t::after { content: "T"; font: bold 18px "Liberation Serif", serif; color: #111; }
.ci-a { display: block; margin-left: 9px; text-align: center; font-size: 10px; line-height: 9px; color: #222; }
.ci-a::before { content: "A"; display: block; }
.ci-a::after { content: "A"; display: block; border-top: 1px solid #222; }
.ci-k { font-size: 10px; color: #222; letter-spacing: -1px; }
.ci-k::before { content: "AV"; text-decoration: underline; }
.ci-v { font-size: 10px; color: #111; background: #999; height: 11px; width: 17px; margin-left: 9px; letter-spacing: 1px; }
.ci-v::before { content: "AV"; }
.p-cs { height: 21px; }
```
